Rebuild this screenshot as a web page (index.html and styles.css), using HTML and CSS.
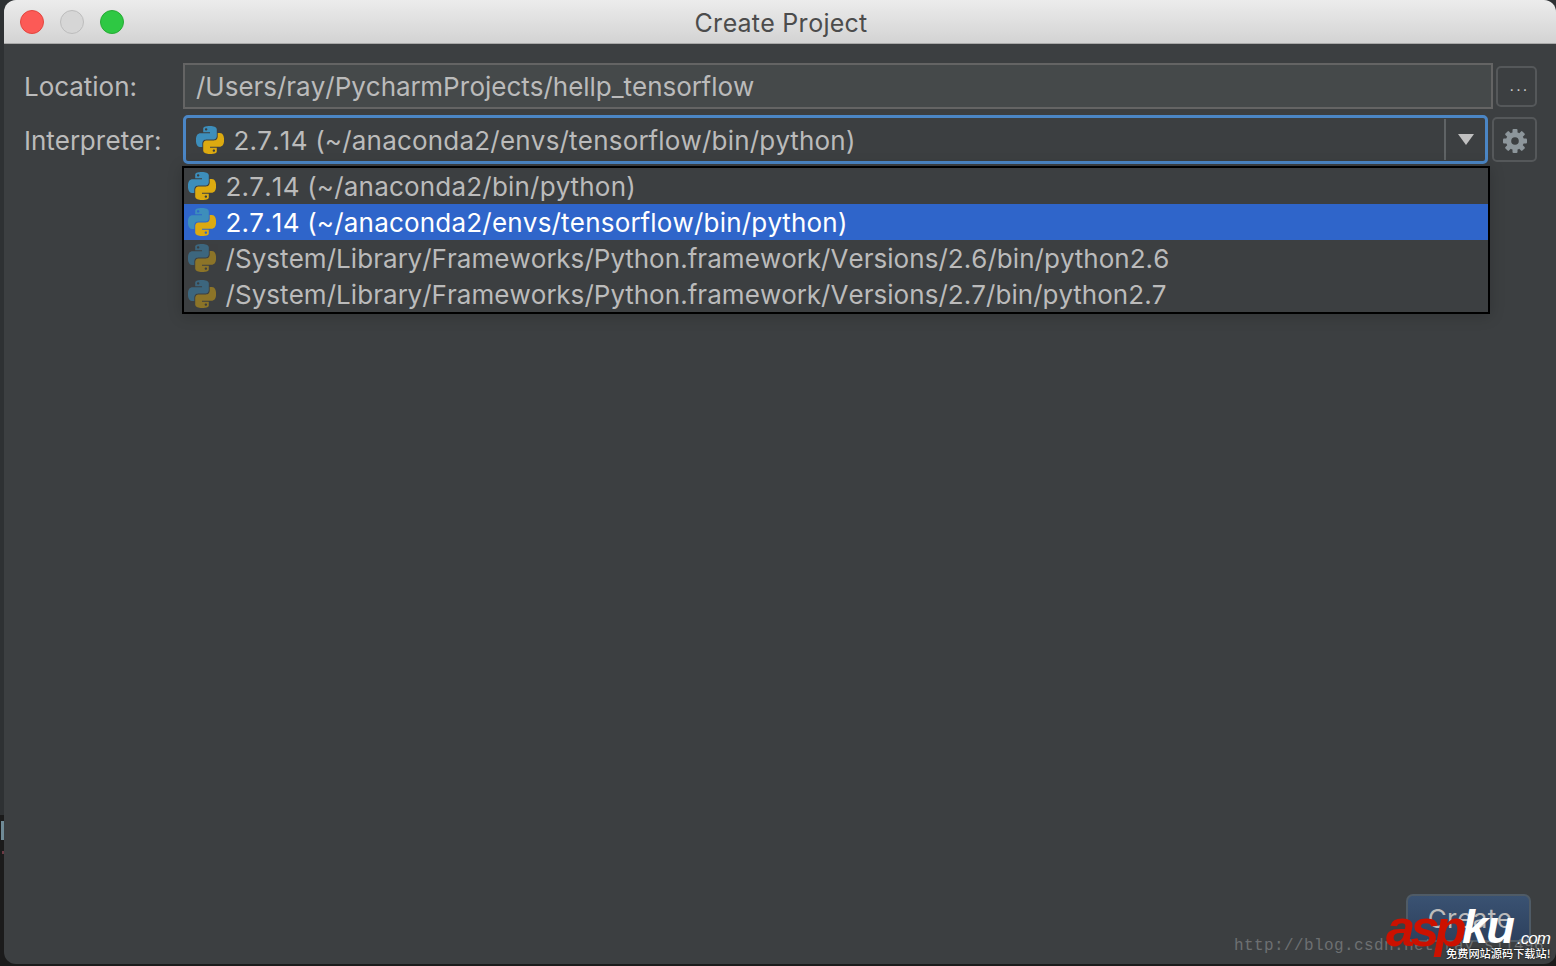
FILE: index.html
```html
<!DOCTYPE html>
<html lang="en">
<head>
<meta charset="utf-8">
<title>Create Project</title>
<link rel="stylesheet" href="styles.css">
</head>
<body>
<svg class="defs" width="0" height="0" aria-hidden="true">
  <symbol id="py" viewBox="0 0 24 24">
    <path class="py-blue" fill-rule="evenodd" d="M14.25.18l.9.2.73.26.59.3.45.32.34.34.25.34.16.33.1.3.04.26.02.2-.01.13V8.5l-.05.63-.13.55-.21.46-.26.38-.3.31-.33.25-.35.19-.35.14-.33.1-.3.07-.26.04-.21.02H8.77l-.69.05-.59.14-.5.22-.41.27-.33.32-.27.35-.2.36-.15.37-.1.35-.07.32-.04.27-.02.21v3.06H3.17l-.21-.03-.28-.07-.32-.12-.35-.18-.36-.26-.36-.36-.35-.46-.32-.59-.28-.73-.21-.88-.14-1.05-.05-1.23.06-1.22.16-1.04.24-.87.32-.71.36-.57.4-.44.42-.33.42-.24.4-.16.36-.1.32-.05.24-.01h.16l.06.01h8.16v-.83H6.18l-.01-2.75-.02-.37.05-.34.11-.31.17-.28.25-.26.31-.23.38-.2.44-.18.51-.15.58-.12.64-.1.71-.06.77-.04.84-.02 1.27.05zm-6.3 1.98l-.23.33-.08.41.08.41.23.34.33.22.41.09.41-.09.33-.22.23-.34.08-.41-.08-.41-.23-.33-.33-.22-.41-.09-.41.09z"/>
    <path class="py-yellow" fill-rule="evenodd" d="M21.04 6.11l.28.06.32.12.35.18.36.27.36.35.35.47.32.59.28.73.21.88.14 1.04.05 1.23-.06 1.23-.16 1.04-.24.86-.32.71-.36.57-.4.45-.42.33-.42.24-.4.16-.36.09-.32.05-.24.02-.16-.01h-8.22v.82h5.84l.01 2.76.02.36-.05.34-.11.31-.17.29-.25.25-.31.24-.38.2-.44.17-.51.15-.58.13-.64.09-.71.07-.77.04-.84.01-1.27-.04-1.07-.14-.9-.2-.73-.25-.59-.3-.45-.33-.34-.34-.25-.34-.16-.33-.1-.3-.04-.25-.02-.2.01-.13v-5.34l.05-.64.13-.54.21-.46.26-.38.3-.32.33-.24.35-.2.35-.14.33-.1.3-.06.26-.04.21-.02.13-.01h5.84l.69-.05.59-.14.5-.21.41-.28.33-.32.27-.35.2-.36.15-.36.1-.35.07-.32.04-.28.02-.21V6.07h2.09l.14.01zm-6.47 14.25l-.23.33-.08.41.08.41.23.33.33.23.41.08.41-.08.33-.23.23-.33.08-.41-.08-.41-.23-.33-.33-.23-.41-.08-.41.08z"/>
  </symbol>
</svg>

<div class="window">
  <header class="titlebar">
    <div class="lights">
      <span class="light light-red"></span>
      <span class="light light-gray"></span>
      <span class="light light-green"></span>
    </div>
    <div class="title">Create Project</div>
  </header>

  <main class="content">
    <div class="form">
      <div class="row row-location">
        <label class="label">Location:</label>
        <div class="input">/Users/ray/PycharmProjects/hellp_tensorflow</div>
        <button class="browse" type="button"><span class="dots">...</span></button>
      </div>
      <div class="row row-interpreter">
        <label class="label label-interpreter">Interpreter:</label>
        <div class="combo">
          <svg class="py-icon"><use href="#py"/></svg>
          <span class="combo-text">2.7.14 (~/anaconda2/envs/tensorflow/bin/python)</span>
          <span class="combo-arrow"><span class="triangle"></span></span>
        </div>
        <button class="gear" type="button">
          <svg class="gear-icon" viewBox="0 0 24 24">
            <g fill="#8d969b">
              <rect x="9.5" y="0" width="5" height="24" rx="1"/>
              <rect x="9.5" y="0" width="5" height="24" rx="1" transform="rotate(45 12 12)"/>
              <rect x="9.5" y="0" width="5" height="24" rx="1" transform="rotate(90 12 12)"/>
              <rect x="9.5" y="0" width="5" height="24" rx="1" transform="rotate(135 12 12)"/>
            </g>
            <circle cx="12" cy="12" r="6.5" fill="none" stroke="#8d969b" stroke-width="5"/>
            <circle cx="12" cy="12" r="3.8" fill="#3c3f41"/>
          </svg>
        </button>
      </div>

      <ul class="popup">
        <li class="item"><svg class="py-icon"><use href="#py"/></svg><span>2.7.14 (~/anaconda2/bin/python)</span></li>
        <li class="item item-selected"><svg class="py-icon"><use href="#py"/></svg><span>2.7.14 (~/anaconda2/envs/tensorflow/bin/python)</span></li>
        <li class="item item-system"><svg class="py-icon py-dim"><use href="#py"/></svg><span>/System/Library/Frameworks/Python.framework/Versions/2.6/bin/python2.6</span></li>
        <li class="item item-system"><svg class="py-icon py-dim"><use href="#py"/></svg><span>/System/Library/Frameworks/Python.framework/Versions/2.7/bin/python2.7</span></li>
      </ul>
    </div>

    <footer class="footer">
      <button class="create" type="button">Create</button>
    </footer>
  </main>

  <div class="watermark">
    <span class="wm-url">http://blog.csdn.net/ray_sj1496</span>
    <span class="wm-asp">asp</span>
    <span class="wm-ku">ku</span>
    <span class="wm-com">.com</span>
    <span class="wm-cn">免费网站源码下载站!</span>
  </div>
</div>

<span class="edge-mark"></span>
<span class="edge-dot"></span>
</body>
</html>
```

FILE: styles.css
```css
* { box-sizing: border-box; }
html, body { margin: 0; height: 100%; }
body {
  background: linear-gradient(#2e3133 0, #2e3133 815px, #1b1b1b 815px);
  overflow: hidden;
  font-family: Inter, "Liberation Sans", sans-serif;
  font-kerning: none;
  color: #bbbbbb;
  font-size: 26px;
  position: relative;
}
.defs { position: absolute; }
.window {
  position: relative;
  margin-left: 4px;
  width: 1552px;
  height: 964px;
  background: #3c3f41;
  border-radius: 12px;
  overflow: hidden;
  display: flex;
  flex-direction: column;
}
.titlebar {
  height: 44px;
  flex: none;
  position: relative;
  display: flex;
  align-items: center;
  justify-content: center;
  padding: 2px 0 0 2px;
  background: linear-gradient(#ececec, #d3d3d3);
  border-bottom: 1px solid #a9a9a9;
}
.lights {
  position: absolute;
  left: 16px;
  top: 10px;
  display: flex;
  gap: 16px;
}
.light { width: 24px; height: 24px; border-radius: 50%; border: 1px solid; }
.light-red { background: #fc5a56; border-color: #e2463f; }
.light-gray { background: #d6d6d6; border-color: #bcbcbc; }
.light-green { background: #2ec843; border-color: #27aa35; }
.title { font-size: 25px; color: #4c4c4c; letter-spacing: 0.25px; }

.content {
  flex: 1;
  display: flex;
  flex-direction: column;
  padding: 19px 19px 0 20px;
  position: relative;
}
.form { position: relative; }
.row { display: flex; align-items: center; }
.row-location { height: 46px; margin-bottom: 6px; }
.row-interpreter { height: 49px; }
.label { width: 159px; flex: none; letter-spacing: 0; }
.label-interpreter { padding-top: 2px; }
.input {
  flex: 1;
  height: 46px;
  background: #45494a;
  border: 2px solid #646464;
  padding-left: 11px;
  display: flex;
  align-items: center;
  letter-spacing: -0.02px;
}
.browse {
  width: 41px;
  height: 41px;
  margin-left: 3px;
  flex: none;
  background: #3c3f41;
  border: 2px solid #55585a;
  border-radius: 5px;
  color: #c8c8c8;
  font: 16px "Liberation Sans", sans-serif;
  padding: 0 0 0 6px;
}
.dots { letter-spacing: 2.2px; }
.combo {
  flex: 1;
  height: 49px;
  display: flex;
  align-items: center;
  background: #3c3f41;
  border: 3px solid #4b86c5;
  border-radius: 5px;
  padding-left: 10px;
  letter-spacing: 0.2px;
}
.py-icon { width: 28px; height: 28px; flex: none; margin-right: 10px; }
.py-blue { fill: #3d8ebb; }
.py-yellow { fill: #dcaa10; }
.py-dim { opacity: .5; }
.combo-text { flex: 1; padding-top: 2px; margin-left: -0.5px; }
.combo-arrow {
  width: 41px;
  align-self: stretch;
  margin: 1px 0;
  border-left: 2px solid #5f6365;
  display: flex;
  align-items: center;
  justify-content: center;
  flex: none;
}
.triangle {
  width: 0;
  height: 0;
  border-left: 8px solid transparent;
  border-right: 8px solid transparent;
  border-top: 11px solid #c0c0c0;
}
.gear {
  width: 45px;
  height: 45px;
  margin-left: 4px;
  flex: none;
  background: #3c3f41;
  border: 2px solid #55585a;
  border-radius: 5px;
  padding: 2px 0 0 1px;
  display: flex;
  align-items: center;
  justify-content: center;
}
.gear-icon { width: 24px; height: 24px; }

.popup {
  position: absolute;
  left: 158px;
  top: 103px;
  width: 1308px;
  margin: 0;
  padding: 0;
  list-style: none;
  background: #3c3f41;
  border: 2px solid #000;
  box-shadow: 0 2px 14px rgba(0, 0, 0, .18);
  letter-spacing: 0.2px;
}
.item {
  height: 36px;
  display: flex;
  align-items: center;
  padding-left: 4px;
  white-space: nowrap;
}
.item span { margin-left: -0.5px; }
.item-selected { background: #2f65ca; color: #fff; }
.item-system { letter-spacing: 0.05px; }

.footer {
  margin-top: auto;
  display: flex;
  justify-content: flex-end;
  padding: 0 6px 22px 0;
}
.create {
  width: 125px;
  height: 48px;
  border: 2px solid #4f5b66;
  border-radius: 7px;
  background: linear-gradient(#3a5272, #2d415e);
  color: #bbbbbb;
  font: inherit;
  letter-spacing: 0.4px;
  padding: 0 0 0 3px;
}

.watermark { position: absolute; inset: 0; pointer-events: none; }
.watermark span { position: absolute; white-space: nowrap; }
.wm-url {
  left: 1230px;
  top: 935px;
  font: 16px/22px "Liberation Mono", monospace;
  letter-spacing: 0.4px;
  color: #6d7072;
}
.wm-asp {
  left: 1382px;
  top: 898px;
  font: italic bold 52px/60px "Liberation Sans", sans-serif;
  color: #cc1100;
  letter-spacing: -4.5px;
}
.wm-ku {
  left: 1458px;
  top: 899px;
  font: italic bold 47px/56px "Liberation Sans", sans-serif;
  color: #fff;
  letter-spacing: -2px;
}
.wm-com {
  left: 1513px;
  top: 927px;
  font: italic 17px/24px "Liberation Sans", sans-serif;
  letter-spacing: -1px;
  color: #fff;
}
.wm-cn {
  left: 1442px;
  top: 945px;
  font: 500 11.2px/16px "Noto Sans CJK SC", sans-serif;
  color: #fff;
  text-shadow: 0 0 2px #000;
}
.edge-mark {
  position: absolute;
  left: 1px;
  top: 821px;
  width: 3px;
  height: 19px;
  background: #6f8a96;
}
.edge-dot {
  position: absolute;
  left: 2px;
  top: 851px;
  width: 2px;
  height: 3px;
  background: #6b3a44;
}
```
